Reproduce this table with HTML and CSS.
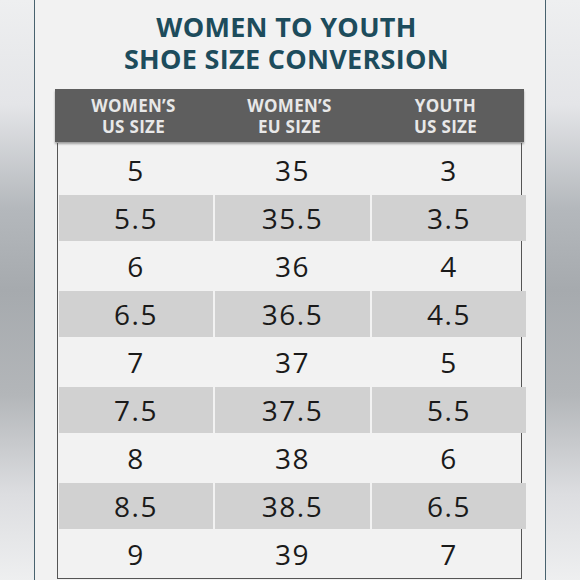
FILE: index.html
```html
<!DOCTYPE html>
<html lang="en">
<head>
  <meta charset="UTF-8" />
  <meta name="viewport" content="width=device-width, initial-scale=1.0" />
  <title>Women to Youth Shoe Size Conversion</title>
  <link rel="stylesheet" href="styles.css">
</head>
<body>
  <div class="card">
    <h1><span>WOMEN TO YOUTH</span><span>SHOE SIZE CONVERSION</span></h1>
    <div class="chart">
      <div class="chart-head">
        <div>WOMEN’S<br>US SIZE</div>
        <div>WOMEN’S<br>EU SIZE</div>
        <div>YOUTH<br>US SIZE</div>
      </div>
      <div class="chart-body">
        <div class="row"><span>5</span><span>35</span><span>3</span></div>
        <div class="row alt"><span>5.5</span><span>35.5</span><span>3.5</span></div>
        <div class="row"><span>6</span><span>36</span><span>4</span></div>
        <div class="row alt"><span>6.5</span><span>36.5</span><span>4.5</span></div>
        <div class="row"><span>7</span><span>37</span><span>5</span></div>
        <div class="row alt"><span>7.5</span><span>37.5</span><span>5.5</span></div>
        <div class="row"><span>8</span><span>38</span><span>6</span></div>
        <div class="row alt"><span>8.5</span><span>38.5</span><span>6.5</span></div>
        <div class="row"><span>9</span><span>39</span><span>7</span></div>
      </div>
    </div>
  </div>
</body>
</html>
```

FILE: styles.css
```css
/* Reset and base styling */
* { box-sizing: border-box; margin: 0; padding: 0; }
html, body { height: 100%; overflow: hidden; }
body {
  font-family: "Open Sans", "Liberation Sans", sans-serif;
  background: linear-gradient(to bottom, #eeeff0 0%, #e4e5e8 18%, #b4b8bc 36%, #a6aaae 50%, #b3b6b9 68%, #dcdde0 85%, #eeeff0 100%);
}
.card {
  width: 512px;
  height: 100%;
  margin: 0 auto;
  background: #f2f2f2;
  border-left: 1px solid #48626e;
  border-right: 1px solid #48626e;
  padding: 11px 20px 0;
}
h1 {
  text-align: center;
  font-size: 27px;
  font-weight: 700;
  color: #1d4c5c;
  letter-spacing: 0.3px;
  margin: 0 7px 14px 0;
}
h1 span { display: block; height: 32px; line-height: 32px; }
.chart { width: 469px; }
.chart-head {
  display: grid;
  grid-template-columns: 157px 155px 157px;
  height: 53px;
  background: #5e5e5e;
  box-shadow: 0 2px 2px rgba(0,0,0,0.35);
}
.chart-head div {
  display: flex; align-items: center; justify-content: center;
  text-align: center;
  color: #e8e8e8;
  font-size: 17px;
  line-height: 21px;
  font-weight: 700;
  letter-spacing: 0.3px;
}
.chart-body {
  margin: 1px 2px 0;
  border: 1px solid #555;
  border-top: none;
  padding-top: 3px;
}
.row {
  display: grid;
  grid-template-columns: 154px 155px 154px;
  column-gap: 2px;
  height: 48px;
  padding: 1px 1px;
}
.row span {
  display: flex; align-items: center; justify-content: center;
  font-size: 28px;
  letter-spacing: 1.5px;
  color: #1a1a1a;
}
.row.alt span { background: #d1d1d1; }
```
